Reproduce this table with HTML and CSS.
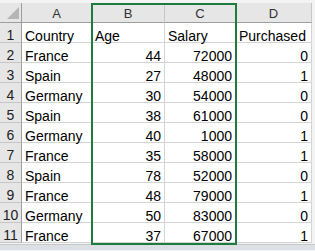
FILE: index.html
```html
<!DOCTYPE html>
<html>
<head>
<meta charset="utf-8">
<link rel="stylesheet" href="styles.css">
</head>
<body>
<div class="sheet">
  <div class="grid">
    <div class="hd corner"><span class="tri"></span></div>
    <div class="hd col">A</div>
    <div class="hd col">B</div>
    <div class="hd col">C</div>
    <div class="hd col">D</div>

    <div class="hd row">1</div><div class="c">Country</div><div class="c">Age</div><div class="c">Salary</div><div class="c">Purchased</div>
    <div class="hd row">2</div><div class="c">France</div><div class="c n">44</div><div class="c n">72000</div><div class="c n">0</div>
    <div class="hd row">3</div><div class="c">Spain</div><div class="c n">27</div><div class="c n">48000</div><div class="c n">1</div>
    <div class="hd row">4</div><div class="c">Germany</div><div class="c n">30</div><div class="c n">54000</div><div class="c n">0</div>
    <div class="hd row">5</div><div class="c">Spain</div><div class="c n">38</div><div class="c n">61000</div><div class="c n">0</div>
    <div class="hd row">6</div><div class="c">Germany</div><div class="c n">40</div><div class="c n">1000</div><div class="c n">1</div>
    <div class="hd row">7</div><div class="c">France</div><div class="c n">35</div><div class="c n">58000</div><div class="c n">1</div>
    <div class="hd row">8</div><div class="c">Spain</div><div class="c n">78</div><div class="c n">52000</div><div class="c n">0</div>
    <div class="hd row">9</div><div class="c">France</div><div class="c n">48</div><div class="c n">79000</div><div class="c n">1</div>
    <div class="hd row">10</div><div class="c">Germany</div><div class="c n">50</div><div class="c n">83000</div><div class="c n">0</div>
    <div class="hd row">11</div><div class="c">France</div><div class="c n">37</div><div class="c n">67000</div><div class="c n">1</div>
  </div>
  <div class="selection"></div>
  <div class="bottom"></div>
</div>
</body>
</html>
```
FILE: styles.css
```css
* { box-sizing: border-box; }
html, body { margin: 0; padding: 0; background: #ffffff; }
body { font-family: "Liberation Sans", Arial, sans-serif; color: #000; overflow: hidden; }
.sheet {
  position: relative;
  width: 315px;
  height: 251px;
  padding-top: 3px;
  background: #f3f3f3;
}
.grid {
  display: grid;
  grid-template-columns: 22px 70px 73px 71px 76px;
  grid-auto-rows: 20px;
  background: #fff;
  width: 312px;
  border-right: 1px solid #c8c8c8;
}
.hd {
  background: #e6e6e6;
  color: #333;
  font-size: 13px;
  display: flex;
  justify-content: center;
  align-items: flex-end;
  line-height: 15px;
  padding-bottom: 1px;
}
.corner { border-right: 1px solid #9e9e9e; border-bottom: 1px solid #9e9e9e; position: relative; }
.tri {
  position: absolute;
  right: 2px;
  bottom: 3px;
  width: 0; height: 0;
  border-left: 12px solid transparent;
  border-bottom: 12px solid #b6b6b6;
}
.col { border-right: 1px solid #c6c6c6; border-bottom: 1px solid #9e9e9e; }
.row {
  border-right: 1px solid #9e9e9e;
  border-bottom: 1px solid #c6c6c6;
  font-size: 14px;
  color: #222;
  align-items: flex-start;
  padding-top: 5px;
  padding-bottom: 0;
}
.c {
  font-size: 14px;
  line-height: 16px;
  border-right: 1px solid #d4d4d4;
  border-bottom: 1px solid #d4d4d4;
  padding: 5px 3px 0 3px;
  display: flex;
  align-items: flex-start;
  white-space: nowrap;
}
.n { justify-content: flex-end; }
.selection {
  position: absolute;
  left: 91px;
  top: 3px;
  width: 146px;
  height: 242px;
  border: 2px solid #1e7b3e;
  pointer-events: none;
}
.bottom {
  height: 6px;
  margin-top: 1px;
  background: #dcdfe4;
  border-top: 1px solid #c8c8c8;
}
```
